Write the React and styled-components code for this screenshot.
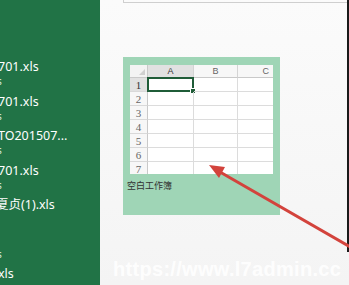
import React from 'react';
import styled, { createGlobalStyle } from 'styled-components';

const GlobalStyle = createGlobalStyle`
  html, body {
    margin: 0;
    padding: 0;
    overflow: hidden;
  }
  body {
    font-family: "Noto Sans", "Noto Sans CJK SC", sans-serif;
  }
`;

const Screen = styled.div`
  position: relative;
  display: flex;
  width: 349px;
  height: 285px;
  overflow: hidden;
  background: #f6f6f6;
`;

const Sidebar = styled.div`
  width: 100px;
  flex: none;
  background: #217346;
  color: #ffffff;
  overflow: hidden;
`;

const RecentList = styled.ul`
  list-style: none;
  margin: 0;
  padding: 59px 0 0;
`;

const RecentItem = styled.li`
  height: 34.5px;
  white-space: nowrap;
`;

const FileName = styled.div`
  font-size: 12.5px;
  line-height: 16px;
  height: 16px;
  margin-left: ${(p) => p.shift || -2}px;
`;

const FilePath = styled.div`
  font-size: 10px;
  line-height: 12px;
  height: 12px;
  color: #d6e9dd;
  margin-left: -3px;
`;

const Main = styled.div`
  position: relative;
  flex: 1;
  padding-left: 23px;
  background: linear-gradient(#fbfbfb, #f4f4f4);
  &::after {
    content: '';
    position: absolute;
    right: 0;
    top: 0;
    width: 2px;
    height: 252px;
    background: #1a1a1a;
  }
`;

const SearchBox = styled.div`
  height: 2px;
  border-left: 1px solid #cfcfcf;
  border-bottom: 1px solid #cfcfcf;
  margin-bottom: 54px;
`;

const TemplateCard = styled.div`
  width: 157px;
  height: 158px;
  box-sizing: border-box;
  padding: 8px 7px 0;
  background: #9fd5b6;
`;

const Sheet = styled.div`
  display: grid;
  grid-template-columns: 18px 46px 44px 40px;
  grid-template-rows: 13px repeat(7, 14px);
  width: 143px;
  height: 109px;
  overflow: hidden;
  background: #ffffff;
  font-family: "Liberation Sans", "Noto Sans", sans-serif;
  font-size: 9px;
  color: #555;
`;

const Corner = styled.div`
  position: relative;
  background: #f3f3f3;
  border-right: 1px solid #c9c9c9;
  border-bottom: 1px solid #c9c9c9;
  &::after {
    content: '';
    position: absolute;
    right: 2px;
    bottom: 2px;
    border-left: 6px solid transparent;
    border-bottom: 6px solid #d0d0d0;
  }
`;

const ColHead = styled.div`
  display: flex;
  align-items: center;
  justify-content: ${(p) => (p.edge ? 'flex-end' : 'center')};
  padding-right: ${(p) => (p.edge ? 8 : 0)}px;
  background: ${(p) => (p.active ? '#e1e1e1' : '#f7f7f7')};
  color: ${(p) => (p.active ? '#333' : '#666')};
  border-right: 1px solid #d4d4d4;
  border-bottom: 1px solid #c9c9c9;
`;

const RowHead = styled.div`
  display: flex;
  align-items: center;
  justify-content: center;
  background: ${(p) => (p.active ? '#e1e1e1' : '#f7f7f7')};
  color: ${(p) => (p.active ? '#333' : '#666')};
  border-right: 1px solid #c9c9c9;
  border-bottom: 1px solid #d9d9d9;
  font-family: "Liberation Serif", serif;
  font-size: 11px;
`;

const Cell = styled.div`
  position: relative;
  border-right: 1px solid #dcdcdc;
  border-bottom: 1px solid #dcdcdc;
  ${(p) =>
    p.selected &&
    `
    border: 2px solid #1f5c38;
    margin: -1px 0 0 -1px;
    &::after {
      content: '';
      position: absolute;
      right: -4px;
      bottom: -4px;
      width: 4px;
      height: 4px;
      background: #1f5c38;
      border: 1px solid #fff;
    }
  `}
`;

const TemplateLabel = styled.div`
  margin: 6px 0 0 -3px;
  font-size: 9px;
  line-height: 11px;
  color: #333;
`;

const Watermark = styled.div`
  position: absolute;
  left: 113px;
  top: 258px;
  font-family: "Liberation Sans", Arial, sans-serif;
  font-weight: bold;
  font-size: 20px;
  line-height: 22px;
  letter-spacing: 0.3px;
  color: rgba(255, 255, 255, 0.9);
  white-space: nowrap;
  pointer-events: none;
`;

const Overlay = styled.svg`
  position: absolute;
  left: 0;
  top: 0;
  pointer-events: none;
`;

const recent = [
  { name: '701.xls', path: 's' },
  { name: '701.xls', path: 's' },
  { name: 'TO201507...', path: 's' },
  { name: '701.xls', path: 's' },
  { name: '夏贞(1).xls', path: '', shift: -4 },
  { name: '', path: 's' },
  { name: 'xls', path: '' },
];

const columns = ['A', 'B', 'C'];
const rows = [1, 2, 3, 4, 5, 6, 7];

const App = () => {
  return (
    <Screen>
      <GlobalStyle />
      <Sidebar>
        <RecentList>
          {recent.map((item, i) => (
            <RecentItem key={i}>
              <FileName shift={item.shift}>{item.name}</FileName>
              <FilePath>{item.path}</FilePath>
            </RecentItem>
          ))}
        </RecentList>
      </Sidebar>
      <Main>
        <SearchBox />
        <TemplateCard>
          <Sheet>
            <Corner />
            {columns.map((c, i) => (
              <ColHead key={c} active={i === 0} edge={c === 'C'}>
                {c}
              </ColHead>
            ))}
            {rows.map((r) => (
              <React.Fragment key={r}>
                <RowHead active={r === 1}>{r}</RowHead>
                {columns.map((c) => (
                  <Cell key={c} selected={r === 1 && c === 'A'} />
                ))}
              </React.Fragment>
            ))}
          </Sheet>
          <TemplateLabel>空白工作簿</TemplateLabel>
        </TemplateCard>
      </Main>
      <Overlay width="349" height="285">
        <line x1="220" y1="172" x2="352" y2="248" stroke="#d3433c" strokeWidth="3" strokeLinecap="round" />
        <polygon points="209,165 219,178 225,167" fill="#d3433c" />
      </Overlay>
      <Watermark>https://www.l7admin.cc</Watermark>
    </Screen>
  );
};

export default App;
